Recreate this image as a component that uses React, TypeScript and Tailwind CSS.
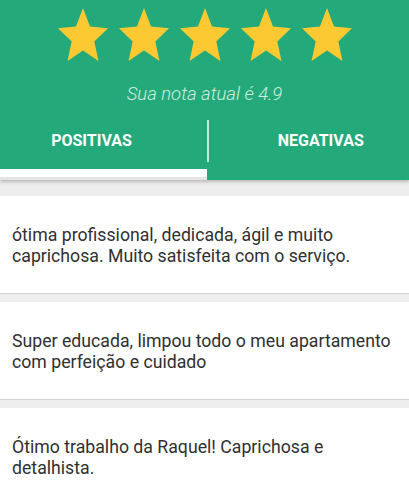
import React from "react";

const reviews = [
  "ótima profissional, dedicada, ágil e muito caprichosa. Muito satisfeita com o serviço.",
  "Super educada, limpou todo o meu apartamento com perfeição e cuidado",
  "Ótimo trabalho da Raquel! Caprichosa e detalhista.",
];

const Star = () => (
  <svg
    viewBox="2 2 20 19"
    preserveAspectRatio="none"
    className="w-[50px] h-[53px]"
  >
    <path
      d="M12 17.27L18.18 21l-1.64-7.03L22 9.24l-7.19-.61L12 2 9.19 8.63 2 9.24l5.46 4.73L5.82 21z"
      fill="#fcc932"
    />
  </svg>
);

const App = () => {
  return (
    <div className="min-h-[500px] bg-[#eeeeee] font-['Roboto',sans-serif]">
      <div className="bg-[#24a97b] shadow-[0_2px_3px_rgba(0,0,0,0.22)] relative">
        <div className="flex justify-center gap-[11px] pt-[8px]">
          <Star />
          <Star />
          <Star />
          <Star />
          <Star />
        </div>
        <div className="mt-[23px] text-center italic font-light text-[18.5px] leading-[20px] text-[#cdeede]">
          Sua nota atual é 4.9
        </div>
        <div className="flex mt-[9px] h-[56px] items-center">
          <div className="w-[207px] flex justify-center pr-6 text-white font-bold text-[16px] uppercase">
            Positivas
          </div>
          <div className="w-[1.5px] h-[42px] bg-[#c6ebd9]"></div>
          <div className="flex-1 flex justify-center pl-6 text-white font-bold text-[16px] uppercase">
            Negativas
          </div>
        </div>
        <div className="flex">
          <div className="w-[207px] h-[11px] bg-white border-b-[3px] border-[#e4e4e4]"></div>
          <div className="flex-1"></div>
        </div>
      </div>

      <div className="pt-[16px]">
        {reviews.map((r, i) => (
          <div
            key={i}
            className="bg-white border-b border-[#d3d3d3] mb-[8px] px-3 pt-[29px] pb-[27px] text-[17.7px] leading-[20.5px] text-[#303030]"
          >
            {r}
          </div>
        ))}
      </div>
    </div>
  );
};

export default App;
